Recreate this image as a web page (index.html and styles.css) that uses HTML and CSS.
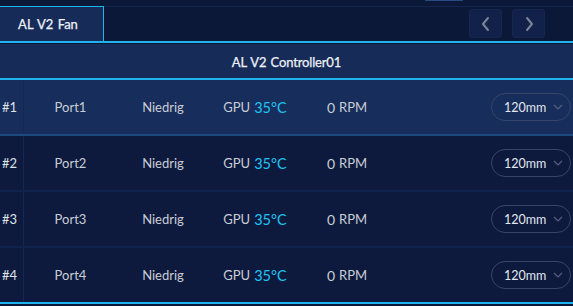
FILE: index.html
```html
<!DOCTYPE html>
<html>
<head>
<meta charset="utf-8">
<link rel="stylesheet" href="styles.css">
</head>
<body>
<div class="app">
  <div class="top">
    <div class="indicator"></div>
    <div class="tabbar">
      <div class="tab">AL V2 Fan</div>
      <div class="nav">
        <button class="navbtn"><svg width="14" height="16" viewBox="0 0 14 16"><path d="M9 2 L4 8 L9 14" fill="none" stroke="#7c8598" stroke-width="2" stroke-linecap="round" stroke-linejoin="round"/></svg></button>
        <button class="navbtn"><svg width="14" height="16" viewBox="0 0 14 16"><path d="M5 2 L10 8 L5 14" fill="none" stroke="#7c8598" stroke-width="2" stroke-linecap="round" stroke-linejoin="round"/></svg></button>
      </div>
    </div>
  </div>
  <div class="header">AL V2 Controller01</div>
  <div class="rows">
    <div class="row active">
      <div class="idx">#1</div>
      <div class="cell">Port1</div>
      <div class="cell">Niedrig</div>
      <div class="cell"><span class="gpu">GPU</span><span class="temp">35°C</span></div>
      <div class="cell"><span class="rpmnum">0</span><span class="rpm">RPM</span></div>
      <div class="selcell"><div class="select"><span>120mm</span><svg width="10" height="6" viewBox="0 0 10 6"><path d="M1 1 L5 5 L9 1" fill="none" stroke="#55617c" stroke-width="1.2"/></svg></div></div>
    </div>
    <div class="row">
      <div class="idx">#2</div>
      <div class="cell">Port2</div>
      <div class="cell">Niedrig</div>
      <div class="cell"><span class="gpu">GPU</span><span class="temp">35°C</span></div>
      <div class="cell"><span class="rpmnum">0</span><span class="rpm">RPM</span></div>
      <div class="selcell"><div class="select"><span>120mm</span><svg width="10" height="6" viewBox="0 0 10 6"><path d="M1 1 L5 5 L9 1" fill="none" stroke="#55617c" stroke-width="1.2"/></svg></div></div>
    </div>
    <div class="row">
      <div class="idx">#3</div>
      <div class="cell">Port3</div>
      <div class="cell">Niedrig</div>
      <div class="cell"><span class="gpu">GPU</span><span class="temp">35°C</span></div>
      <div class="cell"><span class="rpmnum">0</span><span class="rpm">RPM</span></div>
      <div class="selcell"><div class="select"><span>120mm</span><svg width="10" height="6" viewBox="0 0 10 6"><path d="M1 1 L5 5 L9 1" fill="none" stroke="#55617c" stroke-width="1.2"/></svg></div></div>
    </div>
    <div class="row last">
      <div class="idx">#4</div>
      <div class="cell">Port4</div>
      <div class="cell">Niedrig</div>
      <div class="cell"><span class="gpu">GPU</span><span class="temp">35°C</span></div>
      <div class="cell"><span class="rpmnum">0</span><span class="rpm">RPM</span></div>
      <div class="selcell"><div class="select"><span>120mm</span><svg width="10" height="6" viewBox="0 0 10 6"><path d="M1 1 L5 5 L9 1" fill="none" stroke="#55617c" stroke-width="1.2"/></svg></div></div>
    </div>
  </div>
</div>
</body>
</html>
```
FILE: styles.css
```css
* { box-sizing: border-box; }
html, body { margin: 0; padding: 0; }
body {
  background: #0c1838;
  font-family: Lato, "Open Sans", sans-serif;
  color: #c9cdd6;
  width: 573px;
  height: 306px;
  overflow: hidden;
}
.app { display: flex; flex-direction: column; }
.top {
  height: 44px;
  display: flex;
  flex-direction: column;
}
.indicator {
  height: 7px;
  margin-left: 425px;
  width: 38px;
  border-top: 1px solid #2b4a85;
}
.tabbar {
  height: 37px;
  display: flex;
  align-items: stretch;
  border-top: 1px solid #15264e;
  border-bottom: 2px solid #1fb4ee;
  margin-top: -1px;
}
.tab {
  width: 104px;
  margin-top: -1px;
  background: #162b58;
  border-top: 1px solid #1fb4ee;
  border-right: 1px solid #1fb4ee;
  color: #eef1f6;
  font-size: 13px;
  font-weight: 400;
  word-spacing: 1px;
  -webkit-text-stroke: 0.25px #eef1f6;
  display: flex;
  align-items: center;
  justify-content: center;
  padding-right: 7px;
}
.nav {
  margin-left: auto;
  display: flex;
  gap: 10px;
  padding: 2px 28px 3px 0;
}
.navbtn {
  width: 33px;
  height: 29px;
  background: #12214a;
  border: 1px solid #15264f;
  border-radius: 3px;
  padding: 0;
  display: flex;
  align-items: center;
  justify-content: center;
}
.header {
  height: 36px;
  background: #162b58;
  border-bottom: 2px solid #1fb4ee;
  color: #eef1f6;
  font-size: 13px;
  font-weight: 400;
  letter-spacing: -0.15px;
  word-spacing: 1px;
  -webkit-text-stroke: 0.25px #eef1f6;
  display: flex;
  align-items: center;
  justify-content: center;
  padding-top: 1px;
}
.rows { display: flex; flex-direction: column; }
.row {
  height: 56px;
  display: grid;
  grid-template-columns: 24px 93px 92px 92px 92px 1fr;
  align-items: stretch;
  background: #0d1a3e;
  border-bottom: 2px solid #10234c;
  font-size: 13px;
}
.row.active {
  background: #172d5b;
  border-bottom-color: #1b4a7c;
}
.row.last { border-bottom-color: #1fb4ee; }
.idx {
  display: flex;
  align-items: center;
  padding-left: 2px;
  color: #dfe3ea;
  border-right: 1px solid #132852;
  font-size: 13px;
}
.cell {
  display: flex;
  align-items: center;
  justify-content: center;
  gap: 4px;
}
.gpu { color: #c9cdd6; }
.temp { color: #1fc3f0; font-size: 14.5px; }
.rpmnum { font-size: 14px; }
.rpm { font-size: 13px; }
.selcell {
  display: flex;
  align-items: center;
  justify-content: flex-end;
  padding-right: 2px;
}
.select {
  width: 80px;
  height: 28px;
  border: 1px solid #36466a;
  border-radius: 14px;
  display: flex;
  align-items: center;
  padding-left: 12px;
  gap: 7px;
  color: #e2e6ee;
  font-size: 12.5px;
}
```
